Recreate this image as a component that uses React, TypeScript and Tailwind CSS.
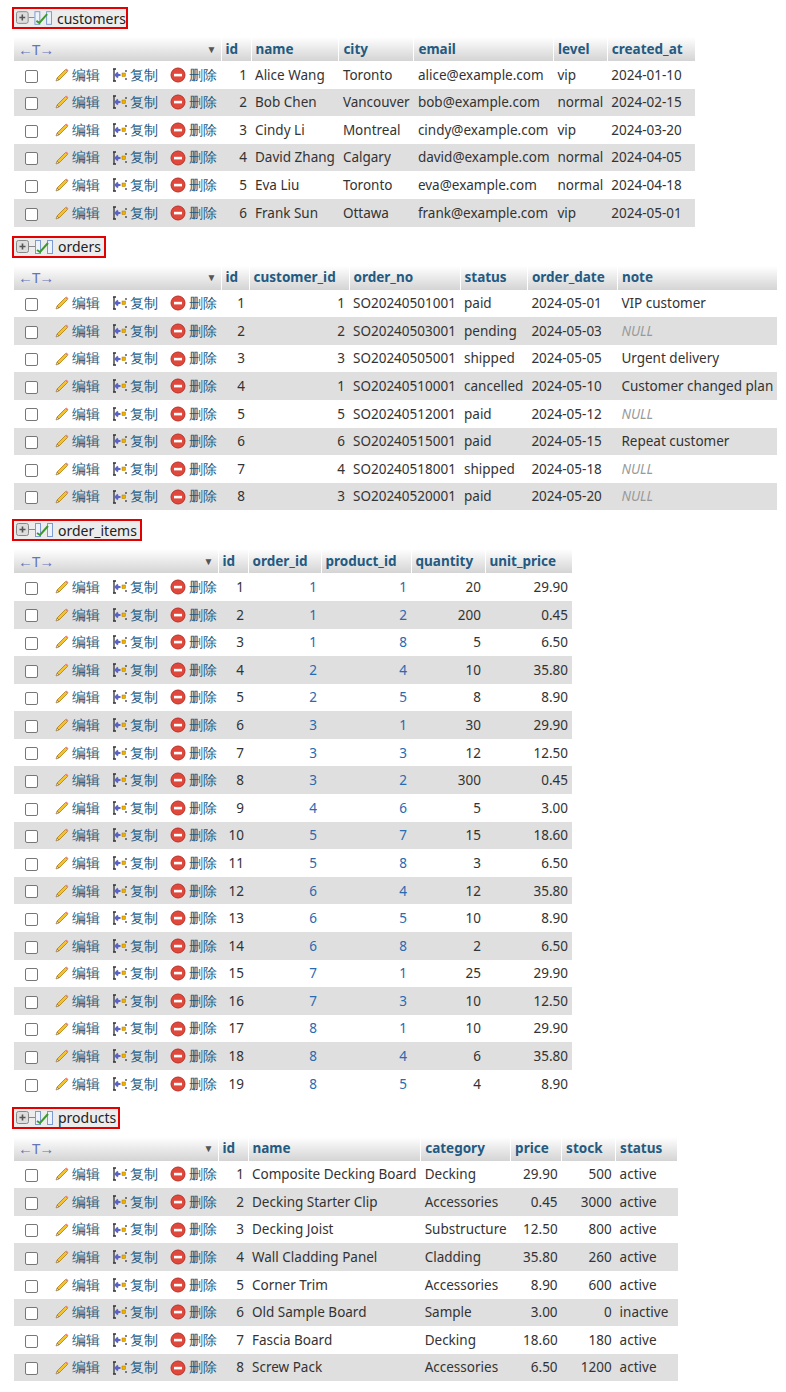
import React from 'react'

type Col = { name: string; w: number; align?: 'right'; link?: boolean }
type Table = { title: string; titleW: number; del: number; cols: Col[]; rows: (string | null)[][] }

const tables: Table[] = [
  {
    title: 'customers',
    titleW: 116,
    del: 57,
    cols: [
      { name: 'id', w: 30, align: 'right' },
      { name: 'name', w: 87 },
      { name: 'city', w: 75 },
      { name: 'email', w: 139 },
      { name: 'level', w: 51 },
      { name: 'created_at', w: 88 },
    ],
    rows: [
      ['1', 'Alice Wang', 'Toronto', 'alice@example.com', 'vip', '2024-01-10'],
      ['2', 'Bob Chen', 'Vancouver', 'bob@example.com', 'normal', '2024-02-15'],
      ['3', 'Cindy Li', 'Montreal', 'cindy@example.com', 'vip', '2024-03-20'],
      ['4', 'David Zhang', 'Calgary', 'david@example.com', 'normal', '2024-04-05'],
      ['5', 'Eva Liu', 'Toronto', 'eva@example.com', 'normal', '2024-04-18'],
      ['6', 'Frank Sun', 'Ottawa', 'frank@example.com', 'vip', '2024-05-01'],
    ],
  },
  {
    title: 'orders',
    titleW: 94,
    del: 57,
    cols: [
      { name: 'id', w: 28, align: 'right' },
      { name: 'customer_id', w: 100, align: 'right' },
      { name: 'order_no', w: 111 },
      { name: 'status', w: 66 },
      { name: 'order_date', w: 90 },
      { name: 'note', w: 160 },
    ],
    rows: [
      ['1', '1', 'SO20240501001', 'paid', '2024-05-01', 'VIP customer'],
      ['2', '2', 'SO20240503001', 'pending', '2024-05-03', null],
      ['3', '3', 'SO20240505001', 'shipped', '2024-05-05', 'Urgent delivery'],
      ['4', '1', 'SO20240510001', 'cancelled', '2024-05-10', 'Customer changed plan'],
      ['5', '5', 'SO20240512001', 'paid', '2024-05-12', null],
      ['6', '6', 'SO20240515001', 'paid', '2024-05-15', 'Repeat customer'],
      ['7', '4', 'SO20240518001', 'shipped', '2024-05-18', null],
      ['8', '3', 'SO20240520001', 'paid', '2024-05-20', null],
    ],
  },
  {
    title: 'order_items',
    titleW: 130,
    del: 54,
    cols: [
      { name: 'id', w: 30, align: 'right' },
      { name: 'order_id', w: 73, align: 'right', link: true },
      { name: 'product_id', w: 90, align: 'right', link: true },
      { name: 'quantity', w: 74, align: 'right' },
      { name: 'unit_price', w: 87, align: 'right' },
    ],
    rows: [
      ['1', '1', '1', '20', '29.90'],
      ['2', '1', '2', '200', '0.45'],
      ['3', '1', '8', '5', '6.50'],
      ['4', '2', '4', '10', '35.80'],
      ['5', '2', '5', '8', '8.90'],
      ['6', '3', '1', '30', '29.90'],
      ['7', '3', '3', '12', '12.50'],
      ['8', '3', '2', '300', '0.45'],
      ['9', '4', '6', '5', '3.00'],
      ['10', '5', '7', '15', '18.60'],
      ['11', '5', '8', '3', '6.50'],
      ['12', '6', '4', '12', '35.80'],
      ['13', '6', '5', '10', '8.90'],
      ['14', '6', '8', '2', '6.50'],
      ['15', '7', '1', '25', '29.90'],
      ['16', '7', '3', '10', '12.50'],
      ['17', '8', '1', '10', '29.90'],
      ['18', '8', '4', '6', '35.80'],
      ['19', '8', '5', '4', '8.90'],
    ],
  },
  {
    title: 'products',
    titleW: 108,
    del: 54,
    cols: [
      { name: 'id', w: 30, align: 'right' },
      { name: 'name', w: 172 },
      { name: 'category', w: 87 },
      { name: 'price', w: 51, align: 'right' },
      { name: 'stock', w: 54, align: 'right' },
      { name: 'status', w: 62 },
    ],
    rows: [
      ['1', 'Composite Decking Board', 'Decking', '29.90', '500', 'active'],
      ['2', 'Decking Starter Clip', 'Accessories', '0.45', '3000', 'active'],
      ['3', 'Decking Joist', 'Substructure', '12.50', '800', 'active'],
      ['4', 'Wall Cladding Panel', 'Cladding', '35.80', '260', 'active'],
      ['5', 'Corner Trim', 'Accessories', '8.90', '600', 'active'],
      ['6', 'Old Sample Board', 'Sample', '3.00', '0', 'inactive'],
      ['7', 'Fascia Board', 'Decking', '18.60', '180', 'active'],
      ['8', 'Screw Pack', 'Accessories', '6.50', '1200', 'active'],
    ],
  },
]

function TitleIcon() {
  return (
    <svg width="38" height="16" viewBox="0 0 38 16">
      <rect x="0.5" y="1.5" width="12" height="12" rx="2" fill="#ddd" stroke="#888" />
      <path d="M3.5 7.5h6M6.5 4.5v6" stroke="#555" strokeWidth="1.6" />
      <path d="M13 7.5h6" stroke="#888" />
      <rect x="19.5" y="1.5" width="5" height="13" fill="#eef3fb" stroke="#7d9bd0" />
      <rect x="31.5" y="1.5" width="5" height="13" fill="#eef3fb" stroke="#7d9bd0" />
      <path d="M21 11l3 2 8-9" stroke="#3a9a2a" strokeWidth="2" fill="none" />
    </svg>
  )
}

function Pencil() {
  return (
    <svg width="16" height="16" viewBox="0 0 16 16">
      <path d="M3 11L11.5 2.5l2 2L5 13z" fill="#f2c230" stroke="#b07d10" strokeWidth="0.8" />
      <path d="M3 11l2 2-3 1z" fill="#f6d7a0" stroke="#8a6a3a" strokeWidth="0.6" />
      <path d="M11.5 2.5l2 2 1-1-2-2z" fill="#e88" />
    </svg>
  )
}

function CopyIcon() {
  return (
    <svg width="16" height="16" viewBox="0 0 16 16">
      <path d="M1 2h3M1 14h3M2 2v12" stroke="#333" strokeWidth="1.3" fill="none" />
      <path d="M3.5 8h5M6 5.5L3.5 8 6 10.5" stroke="#5a63c8" strokeWidth="2" fill="none" />
      <rect x="10" y="6" width="3.5" height="3.5" fill="#f0b000" stroke="#a77a00" strokeWidth="0.5" />
      <path d="M14 3v2M14 11v2" stroke="#333" strokeWidth="1.2" />
    </svg>
  )
}

function DeleteIcon() {
  return (
    <svg width="16" height="16" viewBox="0 0 16 16">
      <circle cx="8" cy="8" r="7" fill="#e0483c" stroke="#b83228" />
      <rect x="4" y="6.8" width="8" height="2.6" fill="#fff" />
    </svg>
  )
}

function DataTable({ t }: { t: Table }) {
  return (
    <div className="mb-[9px]">
      <div className="flex items-center gap-[4px] border-2 border-[#e30000] bg-[#ececec] pl-[2px] h-[22px] ml-[-2px]" style={{ width: t.titleW }}>
        <TitleIcon />
        <span className="text-[14px] text-[#222]">{t.title}</span>
      </div>
      <table className="mt-[8px] border-collapse text-[13.5px] text-[#333]">
        <thead>
          <tr className="h-[24px] bg-gradient-to-b from-white to-[#d4d4d4]">
            <th colSpan={4} className="border-r border-white p-0">
              <div className="flex items-center justify-between px-[4px]">
                <span className="text-[#6675b8] text-[15px] font-normal tracking-[-1px]">←T→</span>
                <span className="text-[#555] text-[10px]">▼</span>
              </div>
            </th>
            {t.cols.map((c) => (
              <th key={c.name} className="border-r border-white px-[4px] text-left font-bold text-[#235a81] whitespace-nowrap" style={{ width: c.w }}>
                {c.name}
              </th>
            ))}
          </tr>
        </thead>
        <tbody>
          {t.rows.map((r, i) => (
            <tr key={i} className={`h-[27.6px] ${i % 2 ? 'bg-[#dfdfdf]' : 'bg-white'}`}>
              <td className="w-[34px] p-0 text-center">
                <span className="inline-block w-[13px] h-[13px] border border-[#777] rounded-[2px] bg-white align-middle" />
              </td>
              <td className="w-[58px] p-0">
                <span className="flex items-center gap-[2px] pl-[6px] text-[#235a81] whitespace-nowrap"><Pencil />编辑</span>
              </td>
              <td className="w-[58px] p-0">
                <span className="flex items-center gap-[2px] pl-[6px] text-[#235a81] whitespace-nowrap"><CopyIcon />复制</span>
              </td>
              <td className="p-0" style={{ width: t.del }}>
                <span className="flex items-center gap-[3px] pl-[6px] text-[#235a81] whitespace-nowrap"><DeleteIcon />删除</span>
              </td>
              {r.map((v, j) => {
                const c = t.cols[j]
                return (
                  <td key={j} className={`px-[4px] whitespace-nowrap ${c.align ? 'text-right' : 'text-left'} ${c.link ? 'text-[#2a6ab0]' : ''}`}>
                    {v === null ? <i className="text-[#999]">NULL</i> : v}
                  </td>
                )
              })}
            </tr>
          ))}
        </tbody>
      </table>
    </div>
  )
}

export default function App() {
  return (
    <div className="bg-white pl-[14px] pt-[7px] font-['Noto_Sans','Noto_Sans_CJK_SC',sans-serif]">
      {tables.map((t) => (
        <DataTable key={t.title} t={t} />
      ))}
    </div>
  )
}
